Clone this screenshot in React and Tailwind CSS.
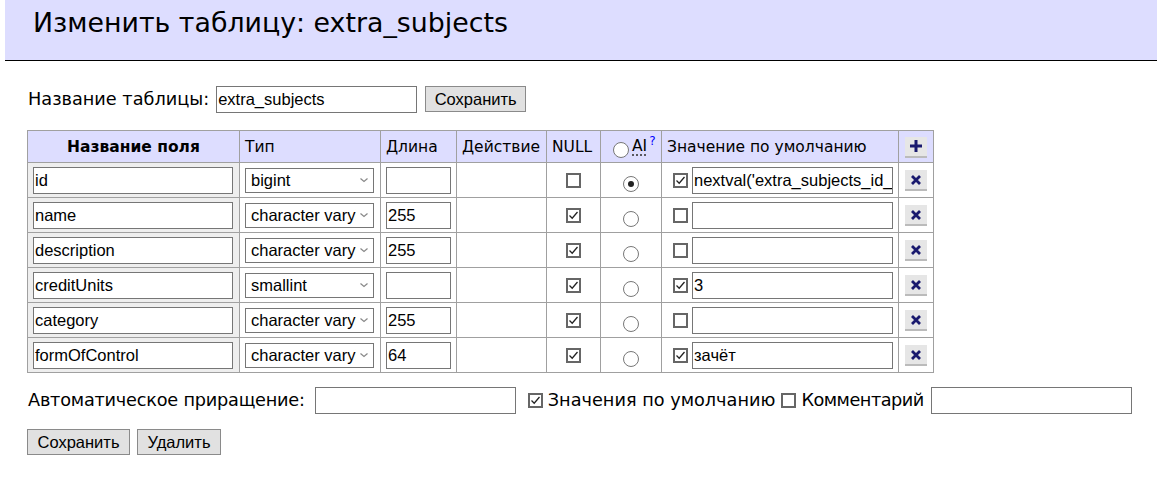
import React from "react";

const rows = [
  { name: "id", type: "bigint", len: "", nul: false, ai: true, defOn: true, def: "nextval('extra_subjects_id_seq'::regclass)" },
  { name: "name", type: "character varying", len: "255", nul: true, ai: false, defOn: false, def: "" },
  { name: "description", type: "character varying", len: "255", nul: true, ai: false, defOn: false, def: "" },
  { name: "creditUnits", type: "smallint", len: "", nul: true, ai: false, defOn: true, def: "3" },
  { name: "category", type: "character varying", len: "255", nul: true, ai: false, defOn: false, def: "" },
  { name: "formOfControl", type: "character varying", len: "64", nul: true, ai: false, defOn: true, def: "зачёт" },
];

const arial = { fontFamily: "'Liberation Sans', Arial, sans-serif" };

function Check({ on }) {
  return (
    <span className="inline-flex w-[15px] h-[15px] border-2 border-[#666] bg-white items-center justify-center align-middle shrink-0">
      {on && (
        <svg width="11" height="11" viewBox="0 0 11 11">
          <path d="M1.5 5.5 L4.2 8.2 L9.5 2" fill="none" stroke="#222" strokeWidth="1.3" />
        </svg>
      )}
    </span>
  );
}

function Radio({ on }) {
  return (
    <span className="inline-flex w-[16px] h-[16px] rounded-full border-[1.5px] border-[#777] bg-white items-center justify-center align-middle">
      {on && <span className="w-[6px] h-[6px] rounded-full bg-[#222]" />}
    </span>
  );
}

function TextBox({ value, w }) {
  return (
    <div
      className={`${w} h-[27px] border border-[#767676] bg-white px-[1px] flex items-center overflow-hidden whitespace-nowrap text-[16.5px] text-black`}
      style={arial}
    >
      {value}
    </div>
  );
}

function Select({ value }) {
  return (
    <div
      className="w-[129px] h-[25px] border border-[#767676] bg-white flex items-center pl-[5px] pr-[4px] text-[16.5px] text-black"
      style={arial}
    >
      <span className="flex-1 overflow-hidden whitespace-nowrap">{value}</span>
      <svg width="10" height="8" viewBox="0 0 10 8" className="ml-[3px] shrink-0">
        <path d="M1.5 2.5 L5 5.5 L8.5 2.5" fill="none" stroke="#888" strokeWidth="1.2" />
      </svg>
    </div>
  );
}

function IconBtn({ plus }) {
  return (
    <span className="inline-flex w-[22px] h-[21px] bg-[#e6e6e6] border-b-2 border-[#bbb] items-center justify-center align-middle">
      {plus ? (
        <svg width="14" height="14" viewBox="0 0 14 14">
          <path d="M7 1 V13 M1 7 H13" stroke="#1a1a6e" strokeWidth="3" />
        </svg>
      ) : (
        <svg width="12" height="12" viewBox="0 0 12 12">
          <path d="M2 2 L10 10 M10 2 L2 10" stroke="#1a1a6e" strokeWidth="2.8" />
        </svg>
      )}
    </span>
  );
}

function Button({ children, w }) {
  return (
    <span
      className={`inline-flex ${w} h-[26px] items-center justify-center border border-[#8a8a8a] bg-[#e1e1e1] text-[16.5px] text-black`}
      style={arial}
    >
      {children}
    </span>
  );
}

export default function App() {
  const cell = "border border-[#a0a0a0] px-[5px] py-0 h-[35px]";
  const th = "border border-[#a0a0a0] bg-[#ddf] text-left px-[5px] h-[32px] overflow-hidden";
  return (
    <div className="w-[1174px] h-[497px] bg-white text-black text-[17.7px] leading-[22px]" style={{ fontFamily: "'DejaVu Sans', Verdana, sans-serif" }}>
      {/* Header */}
      <div className="ml-[5px] mr-[17px] h-[61px] bg-[#ddf] border-b border-black pl-[28px] pt-[6px]">
        <h2 className="text-[26.8px] leading-[34px] font-normal">Изменить таблицу: extra_subjects</h2>
      </div>

      <div className="pl-[27px]">
        {/* Table name */}
        <div className="flex items-center mt-[25px] h-[26px]">
          <span className="ml-[1px]">Название таблицы:</span>
          <span className="ml-[7px]"><TextBox value="extra_subjects" w="w-[201px]" /></span>
          <span className="ml-[8px]"><Button w="w-[101px]">Сохранить</Button></span>
        </div>

        {/* Fields */}
        <table className="mt-[18px] border-collapse text-[15.5px] table-fixed w-[906px]">
          <colgroup>
            <col className="w-[212px]" />
            <col className="w-[141px]" />
            <col className="w-[76px]" />
            <col className="w-[90px]" />
            <col className="w-[54px]" />
            <col className="w-[61px]" />
            <col className="w-[237px]" />
            <col className="w-[35px]" />
          </colgroup>
          <thead>
            <tr>
              <th className={`${th} !text-center font-bold`}>Название поля</th>
              <th className={`${th} font-normal`}>Тип</th>
              <th className={`${th} font-normal`}>Длина</th>
              <th className={`${th} font-normal`}>Действие</th>
              <th className={`${th} font-normal`}>NULL</th>
              <th className={`${th} font-normal whitespace-nowrap`}>
                <span className="relative top-[3px] ml-[7px] mr-[3px]"><Radio on={false} /></span>
                <span className="underline decoration-dotted decoration-[#333] underline-offset-[4px]">AI</span>
                <span className="relative -top-[6px] ml-[2px] text-[#00f] text-[12px]">?</span>
              </th>
              <th className={`${th} font-normal whitespace-nowrap`}>Значение по умолчанию</th>
              <th className={`${th} !text-center`}><IconBtn plus /></th>
            </tr>
          </thead>
          <tbody>
            {rows.map((r) => (
              <tr key={r.name}>
                <td className={`${cell} bg-[#eee]`}><TextBox value={r.name} w="w-[200px]" /></td>
                <td className={cell}><Select value={r.type} /></td>
                <td className={cell}><TextBox value={r.len} w="w-[65px]" /></td>
                <td className={cell}></td>
                <td className={`${cell} text-center`}><Check on={r.nul} /></td>
                <td className={`${cell} text-center`}><span className="relative top-[3px]"><Radio on={r.ai} /></span></td>
                <td className={cell}>
                  <div className="flex items-center gap-[4px] pl-[6px]">
                    <Check on={r.defOn} />
                    <TextBox value={r.def} w="w-[201px]" />
                  </div>
                </td>
                <td className={`${cell} text-center`}><IconBtn /></td>
              </tr>
            ))}
          </tbody>
        </table>

        {/* Options */}
        <div className="flex items-center mt-[14px] h-[26px] whitespace-nowrap">
          <span className="ml-[1px] tracking-[-0.22px]">Автоматическое приращение:</span>
          <span className="ml-[10px]"><TextBox value="" w="w-[201px]" /></span>
          <span className="ml-[12px] flex items-center gap-[5px]"><Check on />Значения по умолчанию</span>
          <span className="ml-[6px] flex items-center gap-[5px] tracking-[-0.5px]"><Check on={false} />Комментарий</span>
          <span className="ml-[7px]"><TextBox value="" w="w-[201px]" /></span>
        </div>

        <div className="flex items-center gap-[7px] mt-[16px]">
          <Button w="w-[103px]">Сохранить</Button>
          <Button w="w-[84px]">Удалить</Button>
        </div>
      </div>
    </div>
  );
}
